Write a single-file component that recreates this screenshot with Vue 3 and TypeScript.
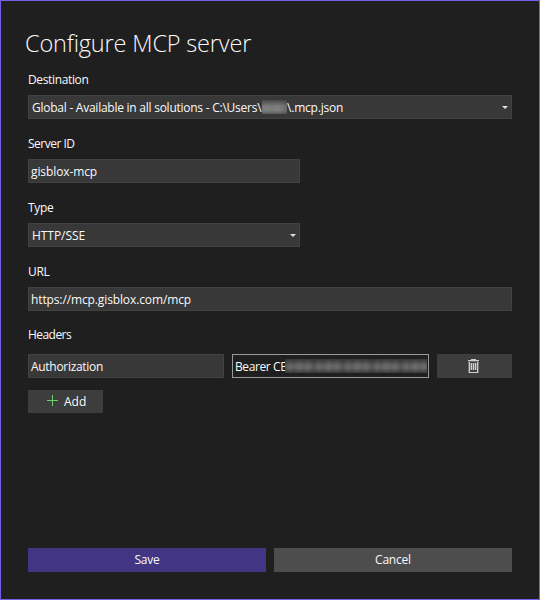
<script setup lang="ts">
import { ref } from 'vue'

const destinationStart = 'Global - Available in all solutions - C:\\Users\\'
const destinationEnd = '\\.mcp.json'
const serverId = ref('gisblox-mcp')
const transport = ref('HTTP/SSE')
const url = ref('https://mcp.gisblox.com/mcp')
const headerName = ref('Authorization')
</script>

<template>
  <main class="dialog">
    <h1 class="title">Configure MCP server</h1>

    <section class="group">
      <div class="label"><span class="t-destination">Destination</span></div>
      <div class="field combo">
        <span class="value t-global">{{ destinationStart }}</span>
        <span class="mask user"></span>
        <span class="value t-json">{{ destinationEnd }}</span>
        <svg class="arrow" viewBox="0 0 6 3"><path d="M0 0h6L3 3z" /></svg>
      </div>
    </section>

    <section class="group">
      <div class="label"><span class="t-server">Server ID</span></div>
      <div class="field short"><span class="value t-id">{{ serverId }}</span></div>
    </section>

    <section class="group">
      <div class="label"><span class="t-type">Type</span></div>
      <div class="field combo short">
        <span class="value t-http">{{ transport }}</span>
        <svg class="arrow" viewBox="0 0 6 3"><path d="M0 0h6L3 3z" /></svg>
      </div>
    </section>

    <section class="group url">
      <div class="label"><span class="t-type">URL</span></div>
      <div class="field"><span class="value t-url">{{ url }}</span></div>
    </section>

    <section class="headers">
      <div class="label"><span class="t-headers">Headers</span></div>
      <div class="row">
        <div class="field"><span class="value t-auth">{{ headerName }}</span></div>
        <div class="field focused">
          <i class="caret"></i>
          <span class="value t-bearer">Bearer CE</span>
          <span class="mask token"></span>
        </div>
        <button class="btn remove" aria-label="Remove header">
          <svg class="trash" viewBox="0 0 11 14">
            <path class="dim" d="M0 2.5H11M0.5 3V14M10.5 3V14M2.5 4V11M4.5 4V11M6.5 4V11M8.5 4V11" />
            <path d="M0 1.5H11M3 0.5H8M1.5 3V13M9.5 3V13M1 13.5H10M3.5 4V11M5.5 4V11M7.5 4V11" />
          </svg>
        </button>
      </div>
      <button class="btn add">
        <svg class="plus" viewBox="0 0 11 13"><path d="M0 5.5H11M5.5 0V11" /></svg>
        <span>Add</span>
      </button>
    </section>

    <footer class="actions">
      <button class="btn save"><span class="t-action">Save</span></button>
      <button class="btn cancel"><span class="t-action">Cancel</span></button>
    </footer>
  </main>
</template>

<style>
body {
  margin: 0;
  background: #1f1f1f;
}
</style>

<style scoped>
.dialog {
  box-sizing: border-box;
  width: 540px;
  height: 600px;
  border: 1px solid #7160e8;
  padding: 27px 27px;
  display: flex;
  flex-direction: column;
  background: #1f1f1f;
  color: #fafafa;
  font: 12px/16px "Open Sans", "Noto Sans", sans-serif;
}
.title {
  margin: 0 0 14px -3px;
  height: 30px;
  font-size: 23.5px;
  line-height: 30px;
  font-weight: 300;
  letter-spacing: -0.16px;
  white-space: nowrap;
}
.label {
  height: 16px;
  margin-bottom: 7px;
  white-space: nowrap;
}
.group {
  margin-bottom: 17px;
}
.group.url {
  margin-bottom: 16px;
}
.field {
  box-sizing: border-box;
  height: 24px;
  display: flex;
  align-items: center;
  border: 1px solid #424242;
  background: #383838;
  padding: 0 2px;
  white-space: pre;
  overflow: hidden;
}
.value {
  padding-top: 2px;
}
.t-destination { letter-spacing: -0.36px; }
.t-global { letter-spacing: -0.25px; }
.t-json { letter-spacing: -0.2px; }
.t-server { letter-spacing: -0.5px; }
.t-id { letter-spacing: -0.1px; }
.t-type { letter-spacing: -0.3px; }
.t-http { letter-spacing: -0.05px; }
.t-url { letter-spacing: -0.12px; }
.t-headers { letter-spacing: -0.55px; }
.t-auth { letter-spacing: -0.3px; }
.t-bearer { letter-spacing: -0.4px; }
.t-action { letter-spacing: -0.2px; }
.t-global,
.t-bearer {
  flex: none;
  box-sizing: border-box;
}
.t-global { width: 230px; }
.t-bearer { width: 50px; margin-left: 1px; }
.combo {
  padding: 0 3px;
}
.short {
  width: 272px;
}
.arrow {
  width: 6px;
  height: 3px;
  margin-left: auto;
  fill: #e0e0e0;
}
.headers .label {
  margin-bottom: 11px;
}
.row {
  display: grid;
  grid-template-columns: 196px 197px 75px;
  gap: 8px;
}
.focused {
  background: #1f1f1f;
  border-color: #999;
}
.caret {
  width: 1px;
  height: 15px;
  margin-right: -1px;
  background: #fff;
}
.mask {
  height: 14px;
  flex: none;
}
.user {
  width: 25px;
  background:
    linear-gradient(#383838cc 0, #38383800 45%, #38383800 75%, #38383888 100%),
    linear-gradient(90deg, #777, #808080 15%, #7a7a7a 40%, #808080 60%, #787878 80%, #686868);
}
.token {
  width: 142px;
  background:
    linear-gradient(#1f1f1faa 0, #1f1f1f00 45%, #1f1f1f00 65%, #1f1f1f99 100%),
    repeating-linear-gradient(90deg, #545454 0, #676767 5px, #5d5d5d 9px, #6c6c6c 14px, #616161 19px, #6a6a6a 23px, #545454 29px);
}
.btn {
  height: 24px;
  border: 0;
  padding: 0;
  display: flex;
  align-items: center;
  justify-content: center;
  color: inherit;
  font: inherit;
  background: #3d3d3d;
}
.remove {
  padding-right: 2px;
}
.trash {
  width: 11px;
  height: 14px;
  fill: none;
  stroke: #d0d0d0;
}
.dim {
  stroke: #707070;
}
.add {
  width: 75px;
  height: 23px;
  margin-top: 12px;
  padding-left: 19px;
  justify-content: flex-start;
  gap: 6px;
}
.plus {
  width: 11px;
  height: 13px;
  fill: none;
  stroke: #6bcf6b;
}
.actions {
  margin-top: auto;
  display: grid;
  grid-template-columns: 1fr 1fr;
  gap: 8px;
}
.save {
  background: #413584;
}
.cancel {
  background: #4d4d4d;
}
</style>
